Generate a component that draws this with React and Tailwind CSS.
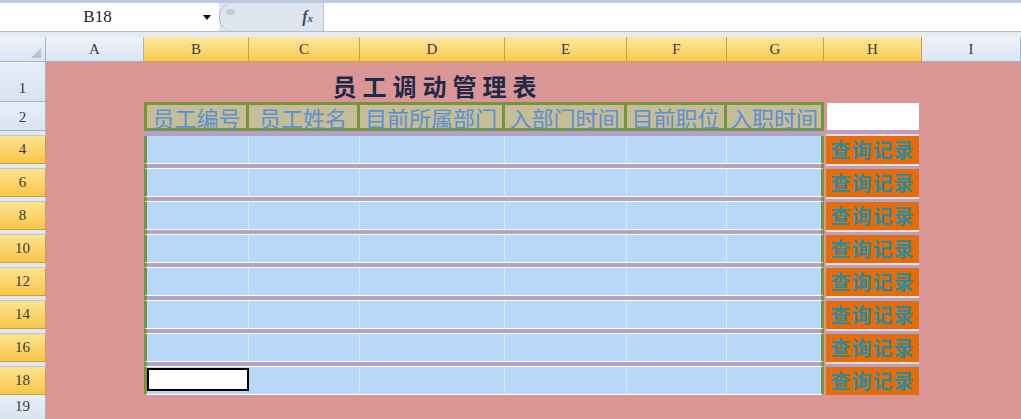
import React from 'react';

const serif = "font-[family-name:'Liberation_Serif','DejaVu_Serif',serif]";
const cjk = "font-['Noto_Sans_CJK_SC',sans-serif]";

const headers = ['员工编号', '员工姓名', '目前所属部门', '入部门时间', '目前职位', '入职时间'];

function RowHead({ label, tone, h }) {
  if (tone === 'yellow') {
    return (
      <div className={`${h} flex items-center justify-center border-b border-r border-[#c9a248] bg-gradient-to-b from-[#fde38f] to-[#f7c744] ${serif} text-[15px] text-[#3a3a3a]`}>
        {label}
      </div>
    );
  }
  if (tone === 'gap') {
    return <div className={`${h} border-b border-r border-[#b9c6d6] bg-[#e3e8ee]`} />;
  }
  return (
    <div className={`${h} flex items-end justify-center pb-[2px] border-b border-r border-[#9eb6ce] bg-gradient-to-b from-[#e6eef8] to-[#d9e4f1] ${serif} text-[15px] text-[#3a3a3a]`}>
      {label}
    </div>
  );
}

// sheet background already pink, empty cell just holds its grid slot
function Pink() {
  return <div />;
}

function DataRow({ n, last }) {
  return (
    <>
      <RowHead label={n} tone="yellow" h="h-[28px]" />
      <Pink />
      {last ? (
        <div className="flex border-l-[3px] border-l-[#77933c] bg-[#b9d8f7] pb-[3px] pt-[1px] border-b border-b-white">
          <div className="flex-1 border-2 border-black bg-white" />
        </div>
      ) : (
        <div className="border-l-[3px] border-l-[#77933c] border-r border-r-[#d5e7fa] border-b border-b-white bg-[#b9d8f7]" />
      )}
      <div className="border-r border-r-[#d5e7fa] border-b border-b-white bg-[#b9d8f7]" />
      <div className="border-r border-r-[#d5e7fa] border-b border-b-white bg-[#b9d8f7]" />
      <div className="border-r border-r-[#d5e7fa] border-b border-b-white bg-[#b9d8f7]" />
      <div className="border-r border-r-[#d5e7fa] border-b border-b-white bg-[#b9d8f7]" />
      <div className="border-r-[3px] border-r-[#77933c] border-b border-b-white bg-[#b9d8f7]" />
      <div className="flex pl-[2px] pr-[3px]">
        <div className={`flex flex-1 items-center justify-center bg-[#e46c0a] ${cjk} text-[20px] font-bold leading-none tracking-[1px] text-[#2f8a9c]`}>
          查询记录
        </div>
      </div>
      <Pink />
    </>
  );
}

function GapRow() {
  return (
    <>
      <RowHead tone="gap" h="h-[5px]" />
      <Pink />
      <div className="border-l-[3px] border-l-[#77933c] border-b border-b-white bg-[#b3a2c7]" />
      <div className="border-b border-b-white bg-[#b3a2c7]" />
      <div className="border-b border-b-white bg-[#b3a2c7]" />
      <div className="border-b border-b-white bg-[#b3a2c7]" />
      <div className="border-b border-b-white bg-[#b3a2c7]" />
      <div className="border-r-[3px] border-r-[#77933c] border-b border-b-white bg-[#b3a2c7]" />
      <div className="flex flex-col pl-[2px] pr-[3px]">
        <div className="h-[2px] bg-[#f2dddc]" />
        <div className="flex-1 bg-[#b3a2c7]" />
      </div>
      <Pink />
    </>
  );
}

export default function App() {
  const colLetters = ['A', 'B', 'C', 'D', 'E', 'F', 'G', 'H', 'I'];
  const dataRows = [4, 6, 8, 10, 12, 14, 16, 18];

  return (
    <div className="h-[419px] w-[1021px] overflow-hidden bg-[#d99694]">
      {/* formula bar */}
      <div className="flex h-[37px] flex-col bg-[#dfe6ef]">
        <div className="h-[3px] bg-[#bccbdf]" />
        <div className="flex h-[29px] border-b border-[#aebdd0]">
          <div className={`flex w-[195px] items-center justify-center bg-white ${serif} text-[17px] text-[#222]`}>
            B18
          </div>
          <div className="flex w-[24px] items-center justify-center bg-white">
            <div className="h-0 w-0 border-l-[4px] border-r-[4px] border-t-[5px] border-l-transparent border-r-transparent border-t-[#111]" />
          </div>
          <div className="relative flex w-[104px] items-center justify-end rounded-l-[15px] border-l border-[#a4b4c8] bg-[#dfe6ef] pr-[10px]">
            <div className="absolute left-[6px] top-[6px] h-[6px] w-[9px] rounded-full bg-[#c4ccd6]" />
            <span className={`${serif} text-[16px] font-bold italic leading-none text-[#3f4d62]`}>
              f<span className="text-[11px]">x</span>
            </span>
          </div>
          <div className="flex-1 border-l border-[#b7c4d4] bg-white" />
        </div>
        <div className="flex-1 bg-[#e6ebf2]" />
      </div>

      {/* sheet grid */}
      <div className="grid grid-cols-[46px_98px_105px_111px_145px_122px_100px_97px_98px_99px]">
        {/* column headers */}
        <div className="relative h-[25px] border-b border-r border-[#9eb6ce] bg-gradient-to-b from-[#eef3f9] to-[#dbe5f1]">
          <div className="absolute bottom-[3px] right-[4px] h-0 w-0 border-b-[10px] border-l-[10px] border-b-[#b7c3d1] border-l-transparent" />
        </div>
        {colLetters.map((c) => {
          const yellow = c !== 'A' && c !== 'I';
          return (
            <div
              key={c}
              className={
                yellow
                  ? `flex items-center justify-center border-b border-r border-[#c9a248] bg-gradient-to-b from-[#fde89f] to-[#f8c94a] ${serif} text-[15px] text-[#3a3a3a]`
                  : `flex items-center justify-center border-b border-r border-[#9eb6ce] bg-gradient-to-b from-[#eef3f9] to-[#dbe5f1] ${serif} text-[15px] text-[#3a3a3a]`
              }
            >
              {c}
            </div>
          );
        })}

        {/* row 1: title overflows out of D like a spreadsheet cell */}
        <RowHead label="1" tone="blue" h="h-[40px]" />
        <Pink />
        <Pink />
        <Pink />
        <div className="relative z-10 flex items-end justify-center overflow-visible pb-[4px] pl-[10px]">
          <span className={`whitespace-nowrap ${cjk} text-[24px] font-bold leading-none tracking-[6px] text-[#1f2a4a]`}>
            员工调动管理表
          </span>
        </div>
        <Pink />
        <Pink />
        <Pink />
        <Pink />
        <Pink />

        {/* row 2: header */}
        <RowHead label="2" tone="blue" h="h-[29px]" />
        <Pink />
        {headers.map((t, i) => (
          <div
            key={t}
            className={
              i === 0
                ? `flex items-center justify-center overflow-visible whitespace-nowrap border-y-[3px] border-l-[3px] border-r-[3px] border-[#77933c] bg-[#c4bd97] ${cjk} text-[22px] leading-none text-[#5b8fd3]`
                : `flex items-center justify-center overflow-visible whitespace-nowrap border-y-[3px] border-r-[3px] border-[#77933c] bg-[#c4bd97] ${cjk} text-[22px] leading-none text-[#5b8fd3]`
            }
          >
            {t}
          </div>
        ))}
        <div className="flex py-[1px] pl-[3px] pr-[3px]">
          <div className="flex-1 bg-white" />
        </div>
        <Pink />

        {/* row 3 */}
        <RowHead tone="gap" h="h-[5px]" />
        <Pink />
        <div className="bg-[#b3a2c7]" />
        <div className="bg-[#b3a2c7]" />
        <div className="bg-[#b3a2c7]" />
        <div className="bg-[#b3a2c7]" />
        <div className="bg-[#b3a2c7]" />
        <div className="bg-[#b3a2c7]" />
        <div className="flex flex-col pl-[2px] pr-[3px]">
          <div className="flex-1 bg-[#b3a2c7]" />
          <div className="h-[2px] bg-[#f2dddc]" />
        </div>
        <Pink />

        {dataRows.map((n, i) => (
          <React.Fragment key={n}>
            <DataRow n={n} last={n === 18} />
            {i < dataRows.length - 1 && <GapRow />}
          </React.Fragment>
        ))}

        {/* row 19 */}
        <RowHead label="19" tone="blue" h="h-[25px]" />
        <Pink />
        <Pink />
        <Pink />
        <Pink />
        <Pink />
        <Pink />
        <Pink />
        <Pink />
        <Pink />
      </div>
    </div>
  );
}
